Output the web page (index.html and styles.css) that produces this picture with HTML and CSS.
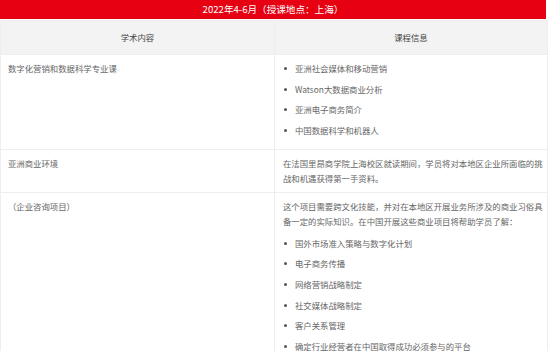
FILE: index.html
```html
<!DOCTYPE html>
<html lang="zh-CN">
<head>
<meta charset="utf-8">
<link rel="stylesheet" href="styles.css">
</head>
<body>
<div class="wrap">
  <div class="title">2022年4-6月（授课地点：上海）</div>
  <table class="course">
    <colgroup><col class="c1"><col class="c2"></colgroup>
    <thead>
      <tr><th>学术内容</th><th>课程信息</th></tr>
    </thead>
    <tbody>
      <tr>
        <td>数字化营销和数据科学专业课</td>
        <td>
          <ul class="list">
            <li>亚洲社会媒体和移动营销</li>
            <li>Watson大数据商业分析</li>
            <li>亚洲电子商务简介</li>
            <li>中国数据科学和机器人</li>
          </ul>
        </td>
      </tr>
      <tr>
        <td>亚洲商业环境</td>
        <td><p class="para">在法国里昂商学院上海校区就读期间，学员将对本地区企业所面临的挑战和机遇获得第一手资料。</p></td>
      </tr>
      <tr>
        <td>（企业咨询项目）</td>
        <td>
          <p class="para">这个项目需要跨文化技能，并对在本地区开展业务所涉及的商业习俗具备一定的实际知识。在中国开展这些商业项目将帮助学员了解：</p>
          <ul class="list">
            <li>国外市场准入策略与数字化计划</li>
            <li>电子商务传播</li>
            <li>网络营销战略制定</li>
            <li>社交媒体战略制定</li>
            <li>客户关系管理</li>
            <li>确定行业经营者在中国取得成功必须参与的平台</li>
          </ul>
        </td>
      </tr>
    </tbody>
  </table>
</div>
</body>
</html>
```

FILE: styles.css
```css
html, body {
  margin: 0;
  padding: 0;
  background: #ffffff;
}
body {
  font-family: "Noto Sans CJK SC", "Microsoft YaHei", sans-serif;
  color: #666666;
  font-size: 8.4px;
}
.wrap {
  width: 547px;
}
.title {
  height: 19px;
  line-height: 19px;
  margin-bottom: 1px;
  background: #e60012;
  color: #ffffff;
  text-align: center;
  font-size: 9.6px;
  margin-right: 1px;
}
.course {
  width: 547px;
  border-collapse: collapse;
  table-layout: fixed;
}
.c1 { width: 274px; }
.c2 { width: 273px; }
.course th,
.course td {
  border: 1px solid #eeeeee;
  vertical-align: top;
  text-align: left;
  padding: 6px 2px 5.5px 7px;
  line-height: 15px;
  font-weight: normal;
}
.course th {
  background: #f3f3f3;
  color: #444444;
  text-align: center;
  vertical-align: middle;
  height: 33px;
  padding: 0;
  box-sizing: border-box;
}
.course thead tr {
  height: 34px;
}
.course td + td {
  padding-left: 8px;
}
.para {
  margin: 0;
}
.list {
  list-style: none;
  margin: 0;
  padding: 0 0 6px 0;
}
.list li {
  display: flex;
  align-items: center;
  line-height: 15px;
  margin-top: 5.6px;
}
.list li:first-child {
  margin-top: 0;
}
.para + .list {
  margin-top: 7px;
}
.list li::before {
  content: "";
  flex: none;
  width: 3px;
  height: 3px;
  border-radius: 50%;
  background: #555555;
  margin: 0 8px 0 1px;
}
```
